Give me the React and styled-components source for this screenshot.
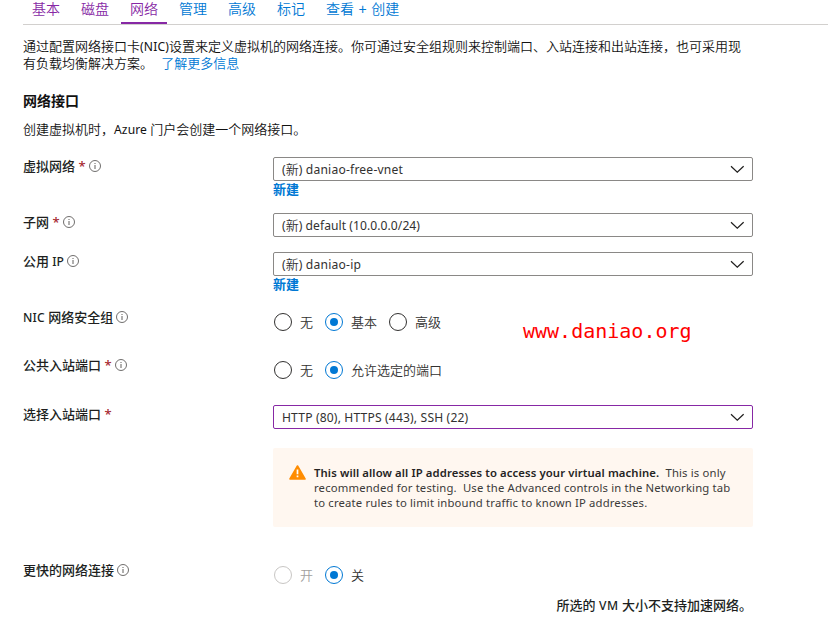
import React from "react";
import styled, { createGlobalStyle, css } from "styled-components";

const GlobalStyle = createGlobalStyle`
  * { box-sizing: border-box; }
  body {
    margin: 0;
    background: #fff;
    color: #323130;
    font: 13px/17px "Noto Sans", "Noto Sans CJK SC", sans-serif;
    overflow: hidden;
  }
`;

const Page = styled.main`
  position: relative;
  width: 828px;
  height: 633px;
  padding-left: 23px;
  overflow: hidden;
`;

const Tabs = styled.nav`
  display: flex;
  gap: 3px;
  height: 25px;
  border-bottom: 1px solid #d2d0ce;
`;

const Tab = styled.a`
  height: 24px;
  padding: 0 9px;
  line-height: 18px;
  font-family: "Liberation Sans", "Noto Sans CJK SC", sans-serif;
  font-size: 14px;
  font-weight: 350;
  word-spacing: 0.6px;
  white-space: pre;
  color: ${(p) => (p.$visited ? "#8728a5" : "#0078d4")};
  border-bottom: 2px solid ${(p) => (p.$active ? "#8728a5" : "transparent")};
`;

const Text = styled.p`
  margin: ${(p) => p.$top}px 0 0;
  width: 740px;
  height: ${(p) => p.$height || 17}px;
  font-weight: 350;
  color: #111;
  white-space: pre;
`;

const Title = styled.h2`
  margin: 20px 0 0;
  font-size: 14px;
  line-height: 17px;
  font-weight: 700;
  color: #111;
`;

const Latin = styled.span`
  font-family: "Noto Sans", sans-serif;
  font-size: 12.1px;
  font-weight: ${(p) => p.$weight || 400};
  letter-spacing: ${(p) => p.$spacing || 0}px;
`;

const Link = styled.a`
  color: #0078d4;
  font-weight: ${(p) => (p.$bold ? 700 : "inherit")};
  margin-left: ${(p) => (p.$bold ? 0 : 1.5)}px;
`;

const Form = styled.section`
  display: flex;
  flex-direction: column;
  margin-top: 19px;
`;

const Row = styled.div`
  display: grid;
  grid-template-columns: 250px 480px;
  align-items: start;
  height: ${(p) => p.$height}px;
`;

const Label = styled.div`
  display: flex;
  align-items: center;
  height: 18px;
  font-weight: 500;
  color: #201f1e;
  white-space: pre;
`;

const Required = styled.span`
  margin-left: 3.5px;
  color: #a4262c;
`;

const InfoSvg = styled.svg`
  width: 12px;
  height: 12px;
  margin-left: ${(p) => p.$gap}px;
  flex: none;
`;

const Field = styled.div`
  display: flex;
  flex-direction: column;
`;

const SelectBox = styled.div`
  display: flex;
  align-items: center;
  justify-content: space-between;
  height: 24px;
  padding: 0 8px;
  font-weight: 350;
  border: 1px solid ${(p) => (p.$active ? "#8728a5" : "#8a8886")};
  border-radius: 2px;
  white-space: pre;
`;

const ChevronSvg = styled.svg`
  width: 14px;
  height: 8px;
`;

const Radios = styled.div`
  display: flex;
  align-items: center;
  height: 28px;
  margin-left: 1px;
`;

const Radio = styled.div`
  display: flex;
  align-items: center;
  gap: 8px;
  margin-right: 12px;
  font-weight: 350;
  color: ${(p) => (p.$disabled ? "#a19f9d" : "#323130")};
`;

const Dot = styled.span`
  display: flex;
  align-items: center;
  justify-content: center;
  width: 18px;
  height: 18px;
  border: 1px solid #323130;
  border-radius: 50%;
  ${(p) => p.$disabled && css`border-color: #c8c6c4;`}
  ${(p) =>
    p.$checked &&
    css`
      border-color: #0078d4;
      &::after {
        content: "";
        width: 8px;
        height: 8px;
        border-radius: 50%;
        background: #0078d4;
      }
    `}
`;

const Notice = styled.div`
  display: flex;
  gap: 8px;
  width: 480px;
  height: 79px;
  margin: 0 0 34px 250px;
  padding: 17px 16px;
  background: #fff7f0;
  border-radius: 2px;
`;

const WarningSvg = styled.svg`
  width: 17px;
  height: 15px;
  flex: none;
`;

const NoticeText = styled.div`
  font-size: 11.3px;
  line-height: 15px;
  font-weight: 450;
  letter-spacing: 0.16px;
  color: #3b3a39;
  white-space: pre;
`;

const Strong = styled.strong`
  font-weight: 600;
  letter-spacing: 0.11px;
  color: #252423;
`;

const SizeNote = styled.div`
  width: 730px;
  margin-top: -1px;
  padding-right: 1px;
  text-align: right;
  font-weight: 500;
  color: #201f1e;
`;

const Watermark = styled.div`
  position: absolute;
  left: 523px;
  top: 319px;
  font: 20px/24px "DejaVu Sans Mono", monospace;
  color: #f00;
`;

const Info = ({ gap = 3.5 }) => (
  <InfoSvg $gap={gap} viewBox="0 0 12 12" fill="none" stroke="#605e5c">
    <circle cx="6" cy="6" r="5.5" strokeWidth="0.9" />
    <path d="M6 5v4M6 3v1" strokeWidth="1" />
  </InfoSvg>
);

const Select = ({ children, active }) => (
  <SelectBox $active={active}>
    <span>{children}</span>
    <ChevronSvg viewBox="0 0 14 8" fill="none" stroke="#201f1e" strokeWidth="1.2">
      <path d="M1 1.2 7.3 7.2 13.6 1.2" />
    </ChevronSvg>
  </SelectBox>
);

const Option = ({ children, checked, disabled }) => (
  <Radio $disabled={disabled}>
    <Dot $checked={checked} $disabled={disabled} />
    {children}
  </Radio>
);

const tabs = ["基本", "磁盘", "网络", "管理", "高级", "标记", "查看 + 创建"];

export default function App() {
  return (
    <>
      <GlobalStyle />
      <Page>
        <Tabs>
          {tabs.map((name, i) => (
            <Tab key={name} $visited={i < 3} $active={i === 2}>{name}</Tab>
          ))}
        </Tabs>
        <Text $top={13} $height={34}>
          通过配置网络接口卡<Latin $spacing={0.15}>(NIC)</Latin>设置来定义虚拟机的网络连接。你可通过安全组规则来控制端口、入站连接和出站连接，也可采用现{"\n"}
          有负载均衡解决方案。{"  "}<Link>了解更多信息</Link>
        </Text>
        <Title>网络接口</Title>
        <Text $top={12}>创建虚拟机时，<Latin $spacing={0.1}>Azure </Latin>门户会创建一个网络接口。</Text>
        <Form>
          <Row $height={56}>
            <Label>虚拟网络<Required>*</Required><Info /></Label>
            <Field>
              <Select><Latin>(</Latin>新<Latin $spacing={0.2}>) daniao-free-vnet</Latin></Select>
              <Link $bold>新建</Link>
            </Field>
          </Row>
          <Row $height={39}>
            <Label>子网<Required>*</Required><Info /></Label>
            <Select><Latin>(</Latin>新<Latin $spacing={0.06}>) default (10.0.0.0/24)</Latin></Select>
          </Row>
          <Row $height={56}>
            <Label>公用<Latin $weight={500}> IP</Latin><Info gap={3} /></Label>
            <Field>
              <Select><Latin>(</Latin>新<Latin $spacing={0.22}>) daniao-ip</Latin></Select>
              <Link $bold>新建</Link>
            </Field>
          </Row>
          <Row $height={48}>
            <Label><Latin $weight={500} $spacing={0.2}>NIC </Latin>网络安全组<Info gap={2.5} /></Label>
            <Radios>
              <Option>无</Option>
              <Option checked>基本</Option>
              <Option>高级</Option>
            </Radios>
          </Row>
          <Row $height={49}>
            <Label>公共入站端口<Required>*</Required><Info /></Label>
            <Radios>
              <Option>无</Option>
              <Option checked>允许选定的端口</Option>
            </Radios>
          </Row>
          <Row $height={43}>
            <Label>选择入站端口<Required>*</Required></Label>
            <Select active><Latin $spacing={0.16}>HTTP (80), HTTPS (443), SSH (22)</Latin></Select>
          </Row>
          <Notice>
            <WarningSvg viewBox="0 0 17 15">
              <path d="M8.5 1 16 14H1Z" fill="#ff8c00" stroke="#ff8c00" strokeWidth="1.6" strokeLinejoin="round" />
              <path d="M8.5 4.5V9.3M8.5 10.6v1.7" stroke="#fff" strokeWidth="1.7" />
            </WarningSvg>
            <NoticeText>
              <Strong>This will allow all IP addresses to access your virtual machine.</Strong>{"  This is only\n"}
              {"recommended for testing.  Use the Advanced controls in the Networking tab\n"}
              {"to create rules to limit inbound traffic to known IP addresses."}
            </NoticeText>
          </Notice>
          <Row $height={37}>
            <Label>更快的网络连接<Info gap={3} /></Label>
            <Radios>
              <Option disabled>开</Option>
              <Option checked>关</Option>
            </Radios>
          </Row>
          <SizeNote>所选的<Latin $weight={500} $spacing={0.4}> VM </Latin>大小不支持加速网络。</SizeNote>
        </Form>
        <Watermark>www.daniao.org</Watermark>
      </Page>
    </>
  );
}
